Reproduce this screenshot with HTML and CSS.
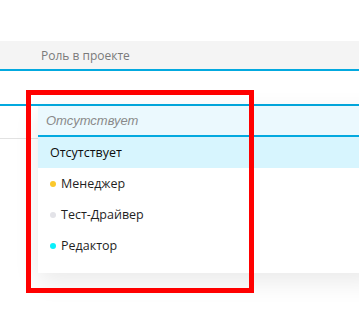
FILE: index.html
```html
<!DOCTYPE html>
<html>
<head>
<meta charset="utf-8">
<link rel="stylesheet" href="styles.css">
</head>
<body>
<div class="page">
  <div class="spacer"></div>
  <div class="header"><span class="header-label">Роль в проекте</span></div>
  <div class="row row-active"></div>
  <div class="row row-plain"></div>

  <div class="dropdown">
    <div class="dd-input"><span class="placeholder">Отсутствует</span></div>
    <ul class="dd-list">
      <li class="dd-option selected">Отсутствует</li>
      <li class="dd-option"><span class="dot dot-yellow"></span>Менеджер</li>
      <li class="dd-option"><span class="dot dot-grey"></span>Тест-Драйвер</li>
      <li class="dd-option"><span class="dot dot-cyan"></span>Редактор</li>
    </ul>
  </div>

  <div class="highlight"></div>
</div>
</body>
</html>
```

FILE: styles.css
```css
html, body {
  margin: 0;
  padding: 0;
  background: #ffffff;
}
.page {
  position: relative;
  width: 359px;
  height: 317px;
  overflow: hidden;
  font-family: "Open Sans", "Noto Sans", sans-serif;
}
.spacer {
  height: 41px;
}
.header {
  height: 28px;
  background: #f4f4f4;
  border-bottom: 2px solid #03a9df;
  display: flex;
  align-items: center;
  padding-left: 41px;
}
.header-label {
  font-size: 12px;
  color: #7a7a7a;
}
.row-active {
  height: 33px;
  border-bottom: 2px solid #03a9df;
}
.row-plain {
  height: 32px;
  border-bottom: 1px solid #e2e2e2;
}
.dropdown {
  position: absolute;
  left: 38px;
  top: 106px;
  width: 340px;
  background: #ffffff;
  box-shadow: 0 8px 24px rgba(0, 0, 0, 0.09);
}
.dd-input {
  height: 29px;
  background: #ebf9fe;
  border-bottom: 2px solid #03a9df;
  display: flex;
  align-items: center;
  padding-left: 8px;
}
.placeholder {
  font-family: "Liberation Sans", Arial, sans-serif;
  font-style: italic;
  font-size: 13px;
  color: #8a8a8a;
}
.dd-list {
  list-style: none;
  margin: 0;
  padding: 0 0 12px 0;
}
.dd-option {
  height: 31px;
  display: flex;
  align-items: center;
  padding-left: 12px;
  font-size: 12.5px;
  color: #1f1f1f;
}
.dd-option.selected {
  background: #d7f5fe;
  color: #0d0d0d;
}
.dot {
  width: 6px;
  height: 6px;
  border-radius: 50%;
  margin-right: 5px;
  flex: none;
}
.dot-yellow { background: #fbc82b; }
.dot-grey { background: #e3e3e8; }
.dot-cyan { background: #0af0fb; }
.highlight {
  position: absolute;
  left: 26px;
  top: 90px;
  width: 218px;
  height: 193px;
  border: 5px solid #ff0000;
}
```
